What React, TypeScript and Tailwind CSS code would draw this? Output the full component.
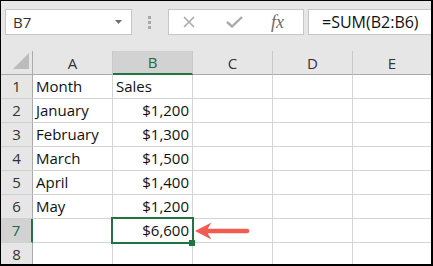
import React from 'react';

const cols = ['A', 'B', 'C', 'D', 'E'];
const colW = ['w-[80px]', 'w-[80px]', 'w-[80px]', 'w-[80px]', 'w-[78px]'];

const rows: { n: number; a: string; b: string }[] = [
  { n: 1, a: 'Month', b: 'Sales' },
  { n: 2, a: 'January', b: '$1,200' },
  { n: 3, a: 'February', b: '$1,300' },
  { n: 4, a: 'March', b: '$1,500' },
  { n: 5, a: 'April', b: '$1,400' },
  { n: 6, a: 'May', b: '$1,200' },
  { n: 7, a: '', b: '$6,600' },
  { n: 8, a: '', b: '' },
];

const cell = 'shrink-0 border-r border-b border-[#d4d4d4] bg-white flex items-end pb-[2px] text-[15px] text-[#111] leading-[20px]';

function FormulaBar() {
  return (
    <div className="flex h-[50px] items-start pl-[4px] pt-[8px]">
      <div className="flex h-[26px] w-[127px] items-center justify-between border border-[#c6c6c6] bg-white pl-[7px] pr-[9px]">
        <span className="text-[15px] leading-none text-[#333]">B7</span>
        <svg width="7" height="4" viewBox="0 0 7 4">
          <path d="M0 0 L7 0 L3.5 4 Z" fill="#6e6e6e" />
        </svg>
      </div>
      <div className="ml-[16px] flex h-[26px] flex-col justify-center gap-[2px]">
        <div className="h-[3px] w-[3px] bg-[#a8a8a8]" />
        <div className="h-[3px] w-[3px] bg-[#a8a8a8]" />
        <div className="h-[3px] w-[3px] bg-[#a8a8a8]" />
      </div>
      <div className="ml-[17px] flex h-[26px] w-[136px] items-center border border-[#c6c6c6] bg-white pl-[14px]">
        <svg width="12" height="12" viewBox="0 0 12 12">
          <path d="M1 1 L11 11 M11 1 L1 11" stroke="#ababab" strokeWidth="1.6" />
        </svg>
        <svg className="ml-[31px]" width="17" height="12" viewBox="0 0 17 12">
          <path d="M1 6 L6 10.5 L16 1" stroke="#ababab" strokeWidth="2.4" fill="none" />
        </svg>
        <span className="ml-[28px] font-['Liberation_Serif',serif] text-[18px] italic leading-none text-[#6a6a6a]">
          fx
        </span>
      </div>
      <div className="ml-[4px] flex h-[26px] flex-1 items-center border-y border-l border-[#c6c6c6] bg-white pl-[13px]">
        <span className="text-[16px] leading-none text-[#111]">=SUM(B2:B6)</span>
      </div>
    </div>
  );
}

function HeaderRow() {
  return (
    <div className="flex h-[24px]">
      <div className="relative h-[24px] w-[32px] shrink-0 border-r border-b border-[#ababab] bg-[#e6e6e6]">
        <svg className="absolute right-[3px] bottom-[5px]" width="16" height="16" viewBox="0 0 16 16">
          <path d="M16 0 L16 16 L0 16 Z" fill="#bcbcbc" />
        </svg>
      </div>
      {cols.map((c, i) => {
        const active = c === 'B';
        return (
          <div
            key={c}
            className={`${colW[i]} flex h-[24px] shrink-0 items-end justify-center pb-[1px] text-[15px] leading-[20px] ${
              i < 4 ? 'border-r border-[#c8c8c8]' : ''
            } ${
              active
                ? 'border-b-2 border-b-[#217346] bg-[#d2d2d2] text-[#1f6b40]'
                : 'border-b border-b-[#ababab] bg-[#e6e6e6] text-[#333]'
            }`}
          >
            {c}
          </div>
        );
      })}
    </div>
  );
}

function DataRow({ n, a, b }: { n: number; a: string; b: string }) {
  const active = n === 7;
  // numbers sit right, text sits left, as in a sheet
  const isNumber = b.startsWith('$');
  return (
    <div className="flex h-[24px] shrink-0">
      <div
        className={`flex h-[24px] w-[32px] shrink-0 items-end justify-center border-b border-b-[#d0d0d0] pb-[2px] text-[15px] leading-[20px] ${
          active
            ? 'border-r-2 border-r-[#217346] bg-[#d2d2d2] text-[#1f6b40]'
            : 'border-r border-r-[#ababab] bg-[#e6e6e6] text-[#333]'
        }`}
      >
        {n}
      </div>
      <div className={`${cell} h-[24px] w-[80px] pl-[3px]`}>{a}</div>
      <div
        className={`${cell} relative h-[24px] w-[80px] ${
          isNumber ? 'justify-end pr-[3px]' : 'justify-start pl-[3px]'
        }`}
      >
        {b}
        {active ? (
          <>
            <div className="absolute -left-[2px] -top-[2px] z-10 h-[27px] w-[83px] border-2 border-[#217346]" />
            <div className="absolute left-[76px] top-[21px] z-20 h-[6px] w-[6px] bg-[#217346]" />
          </>
        ) : null}
      </div>
      <div className={`${cell} h-[24px] w-[80px]`} />
      <div className={`${cell} h-[24px] w-[80px]`} />
      <div className={`${cell} h-[24px] w-[78px] border-r-0`} />
    </div>
  );
}

export default function App() {
  return (
    <div className="relative h-[266px] w-[433px] overflow-hidden border-t border-l border-r-2 border-b-2 border-black bg-[#e6e6e6] font-['Open_Sans',sans-serif]">
      <FormulaBar />
      <div className="flex flex-col">
        <HeaderRow />
        {rows.map((r) => (
          <DataRow key={r.n} n={r.n} a={r.a} b={r.b} />
        ))}
      </div>
      <svg
        className="absolute left-[193px] top-[220px] z-30"
        width="58"
        height="22"
        viewBox="0 0 58 22"
      >
        <path d="M1 10 L17.5 1.5 Q13.5 7 13.5 10 Q13.5 13 17.5 18.5 Z" fill="#f25b50" />
        <line x1="13" y1="10" x2="53" y2="10" stroke="#f25b50" strokeWidth="4.6" strokeLinecap="round" />
      </svg>
    </div>
  );
}
